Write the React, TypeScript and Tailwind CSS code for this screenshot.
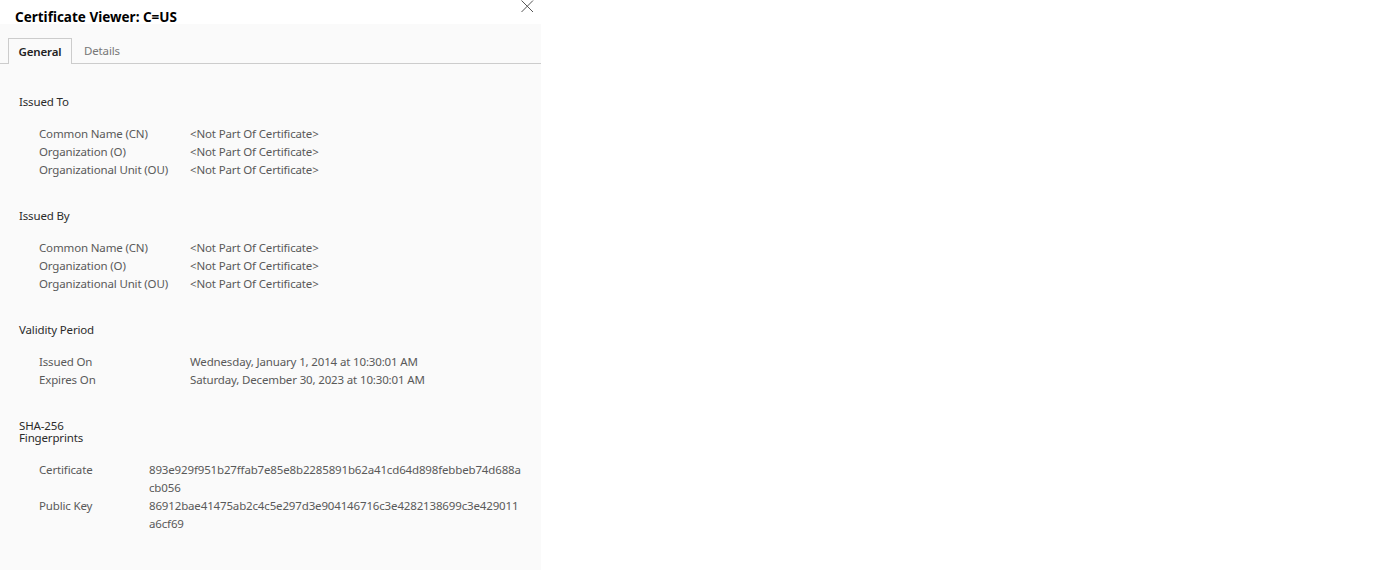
import { useState } from 'react';

type Field = { label: string; value: string };

const issuedTo: Field[] = [
  { label: 'Common Name (CN)', value: '<Not Part Of Certificate>' },
  { label: 'Organization (O)', value: '<Not Part Of Certificate>' },
  { label: 'Organizational Unit (OU)', value: '<Not Part Of Certificate>' },
];

const issuedBy: Field[] = [
  { label: 'Common Name (CN)', value: '<Not Part Of Certificate>' },
  { label: 'Organization (O)', value: '<Not Part Of Certificate>' },
  { label: 'Organizational Unit (OU)', value: '<Not Part Of Certificate>' },
];

const validity: Field[] = [
  { label: 'Issued On', value: 'Wednesday, January 1, 2014 at 10:30:01 AM' },
  { label: 'Expires On', value: 'Saturday, December 30, 2023 at 10:30:01 AM' },
];

const fingerprints: Field[] = [
  {
    label: 'Certificate',
    value: '893e929f951b27ffab7e85e8b2285891b62a41cd64d898febbeb74d688acb056',
  },
  {
    label: 'Public Key',
    value: '86912bae41475ab2c4c5e297d3e904146716c3e4282138699c3e429011a6cf69',
  },
];

const Section = ({
  title,
  fields,
  labelWidth,
}: {
  title: React.ReactNode;
  fields: Field[];
  labelWidth: string;
}) => (
  <section className="mb-[31px]">
    <h3 className="mb-[17px] text-[11.5px] leading-[12px] text-[#2b2b2b]">{title}</h3>
    <div className="pl-[20px]">
      {fields.map((f) => (
        <div key={f.label} className="flex leading-[18px]">
          <span className={`${labelWidth} shrink-0 text-[#595959]`}>{f.label}</span>
          <span className="w-[373px] break-all text-[#595959]">{f.value}</span>
        </div>
      ))}
    </div>
  </section>
);

export default function App() {
  const [tab, setTab] = useState<'general' | 'details'>('general');

  return (
    <div
      className="relative h-[570px] w-[1388px] bg-white text-[11.5px] tracking-[-0.15px]"
      style={{ fontFamily: '"Noto Sans", "Open Sans", sans-serif' }}
    >
      <div className="flex h-[24px] w-[541px] items-start pl-[15px] pt-[7px]">
        <h1 className="text-[13.5px] font-bold leading-[20px] tracking-normal text-black">
          Certificate Viewer: C=US
        </h1>
      </div>
      <button className="absolute left-[520px] top-0 text-[#555]" aria-label="Close">
        <svg width="14" height="14" viewBox="0 0 14 14" fill="none" stroke="currentColor" strokeWidth="1">
          <path d="M1.5 0.5L13 12M13 0.5L1.5 12" />
        </svg>
      </button>

      <div className="h-[546px] w-[541px] bg-[#fafafa]">
        <div className="flex h-[40px] items-end border-b border-[#ccc] pl-[8px]">
          <button
            onClick={() => setTab('general')}
            className={`-mb-px h-[26px] w-[64px] ${
              tab === 'general'
                ? 'border border-b-0 border-[#ccc] bg-[#fafafa] font-semibold text-[#222]'
                : 'text-[#777]'
            }`}
          >
            General
          </button>
          <button
            onClick={() => setTab('details')}
            className={`-mb-px ml-[2px] h-[26px] px-[10px] ${
              tab === 'details'
                ? 'border border-b-0 border-[#ccc] bg-[#fafafa] font-semibold text-[#222]'
                : 'text-[#777]'
            }`}
          >
            Details
          </button>
        </div>

        <div className="pl-[19px] pt-[32px]">
          <Section title="Issued To" fields={issuedTo} labelWidth="w-[151px]" />
          <Section title="Issued By" fields={issuedBy} labelWidth="w-[151px]" />
          <Section title="Validity Period" fields={validity} labelWidth="w-[151px]" />
          <Section
            title={
              <>
                SHA-256
                <br />
                Fingerprints
              </>
            }
            fields={fingerprints}
            labelWidth="w-[110px]"
          />
        </div>
      </div>
    </div>
  );
}
